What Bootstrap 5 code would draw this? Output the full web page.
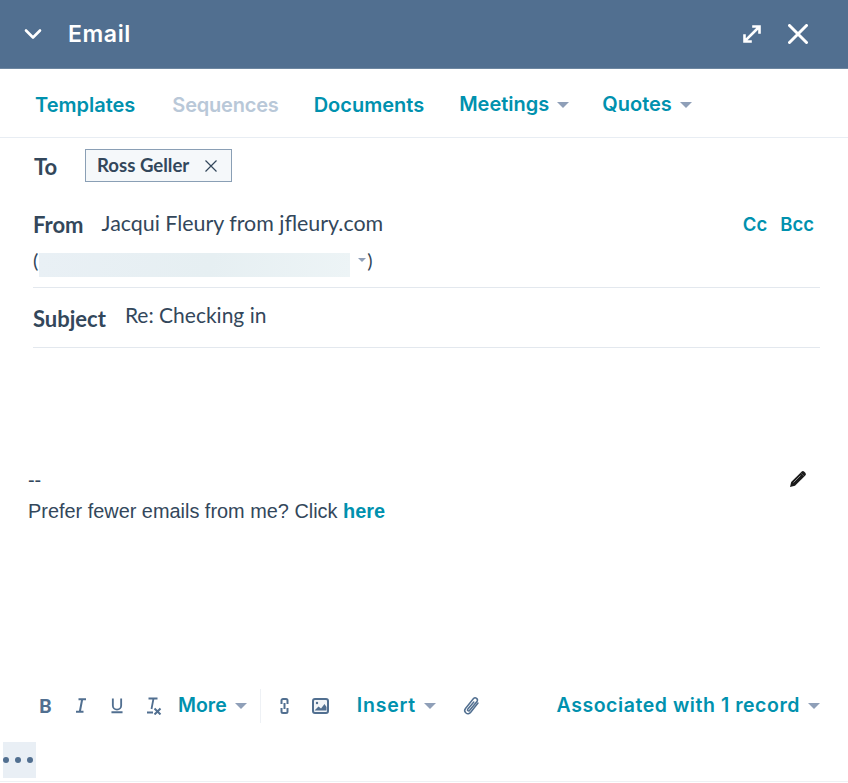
<!DOCTYPE html>
<html lang="en">
<head>
<meta charset="utf-8">
<title>Email</title>
<link href="https://cdn.jsdelivr.net/npm/bootstrap@5.3.0/dist/css/bootstrap.min.css" rel="stylesheet">
<style>
html,body{height:100%;}
body{font-family:Lato,"Liberation Sans",sans-serif;color:#33475b;background:#fff;overflow:hidden;}
.mail-shell{width:848px;height:783px;}
.mail-head{height:69px;background:#516f90;border-bottom:1px solid #6d86a0;color:#fff;padding:0 40px 0 24px;}
.mail-title{font-family:Inter,sans-serif;font-weight:600;font-size:23px;letter-spacing:.6px;margin-left:26px;line-height:1;}
.head-gap{gap:26px;}
.tab-row{height:69px;border-bottom:1px solid #e8edf3;padding:0 0 0 35px;}
.tab-link,.tool-link{font-family:Inter,sans-serif;font-weight:600;color:#0091ae;text-decoration:none;white-space:nowrap;}
.tab-link{font-size:20px;line-height:1;margin-right:35px;padding-top:4px;}
.tab-first{margin-right:37px;}
.tab-off{color:#b9c8d8;letter-spacing:-.2px;}
.tab-drop{padding-top:1px;margin-right:33px;}
.caret-mark{display:inline-block;width:0;height:0;border-left:6px solid transparent;border-right:6px solid transparent;border-top:6px solid #8f9fb8;margin-left:8px;vertical-align:3px;}
.to-row{padding:11px 0 0 34px;height:65px;}
.field-label{font-family:Lato,sans-serif;font-weight:700;font-size:22px;color:#33475b;line-height:1;}
.to-label{width:51px;margin-top:7px;}
.from-label{margin-top:2px;}
.chip-box{height:33px;width:147px;background:#f5f8fa;border:1px solid #8a9fb5;font-family:Lato,sans-serif;font-weight:700;font-size:18.6px;padding:0 14px 0 11px;color:#33475b;}
.from-row{padding:7px 34px 0 33px;height:34px;font-size:21.4px;}
.from-val{margin-left:18px;line-height:1;}
.cc-link{font-family:Inter,sans-serif;font-weight:600;color:#0091ae;font-size:18.5px;margin-left:13px;text-decoration:none;}
.addr-row{margin:0 28px 0 33px;height:51px;border-bottom:1px solid #e3e8ee;font-size:20px;line-height:1;padding-top:13px;position:relative;}
.addr-blur{position:absolute;left:6px;top:16px;width:311px;height:24px;background:linear-gradient(100deg,#e9f0f5,#e6eff2 55%,#edf4f6);}
.addr-end{margin-left:320px;display:flex;align-items:center;}
.mini-caret{display:inline-block;width:0;height:0;border-left:4px solid transparent;border-right:4px solid transparent;border-top:4px solid #8f9fb8;margin:0 1px 1px 0;}
.subj-row{margin:0 28px 0 33px;height:60px;border-bottom:1px solid #e3e8ee;padding-top:3px;}
.subj-val{font-size:21px;line-height:1;margin-left:19px;margin-bottom:10px;}
.body-zone{height:337px;padding:117px 30px 0 28px;font-family:"Liberation Sans",sans-serif;font-size:19.9px;line-height:31px;position:relative;}
.sig-link{color:#0091ae;font-weight:700;text-decoration:none;}
.pen-mark{position:absolute;top:122px;right:41px;}
.tool-row{height:41px;padding:0 28px 0 39px;}
.tool-link{font-size:19.5px;line-height:1;}
.tool-ico{display:block;color:#516f90;flex:none;}
.tool-bold{font-family:Lato,sans-serif;font-weight:900;font-size:19px;line-height:1;color:#516f90;width:11px;}
.gap-i{margin-left:26px;}
.gap-u{margin-left:25px;}
.gap-t{margin-left:24px;}
.gap-more{margin-left:16px;}
.tool-div{width:1px;height:34px;background:#eef1f5;margin:0 19px 0 13px;}
.gap-img{margin-left:23px;}
.gap-insert{margin-left:28px;letter-spacing:.8px;}
.gap-clip{margin-left:26px;}
.tool-assoc{letter-spacing:.55px;}
.dots-box{width:33px;height:36px;margin:16px 0 0 3px;background:#e9eff5;gap:6px;}
.dot-mark{width:6px;height:6px;border-radius:50%;background:#516f90;}
.bottom-line{border-top:1px solid #eef1f4;margin-top:3px;}
</style>
</head>
<body>
<div class="mail-shell d-flex flex-column">
  <div class="mail-head d-flex align-items-center">
    <svg width="18" height="12" viewBox="0 0 18 12" fill="none" stroke="#fff" stroke-width="2.6" stroke-linecap="round" stroke-linejoin="round"><path d="M2 2.500l7 7 7-7"/></svg>
    <span class="mail-title">Email</span>
    <div class="ms-auto d-flex align-items-center head-gap">
      <svg width="20" height="20" viewBox="0 0 20 20" fill="none" stroke="#fff" stroke-width="2.600" stroke-linecap="square"><path d="M3.500 16.500L16.500 3.500M11.500 2.500h6v6M2.500 11.500v6h6"/></svg>
      <svg width="20" height="20" viewBox="0 0 20 20" fill="none" stroke="#fff" stroke-width="3" stroke-linecap="round"><path d="M1.500 1.500l17 17M18.500 1.500l-17 17"/></svg>
    </div>
  </div>
  <div class="tab-row d-flex align-items-center">
    <a class="tab-link tab-first" href="#">Templates</a>
    <a class="tab-link tab-off" href="#">Sequences</a>
    <a class="tab-link" href="#">Documents</a>
    <a class="tab-link tab-drop" href="#">Meetings<span class="caret-mark"></span></a>
    <a class="tab-link tab-drop" href="#">Quotes<span class="caret-mark"></span></a>
  </div>
  <div class="to-row d-flex align-items-start">
    <span class="field-label to-label">To</span>
    <span class="chip-box d-flex align-items-center justify-content-between">Ross Geller
      <svg width="12" height="12" viewBox="0 0 12 12" fill="none" stroke="#33475b" stroke-width="1.200"><path d="M.5.500l11 11M11.500.500l-11 11"/></svg>
    </span>
  </div>
  <div class="from-row d-flex align-items-center">
    <span class="field-label from-label">From</span>
    <span class="from-val">Jacqui Fleury from jfleury.com</span>
    <span class="ms-auto"><a class="cc-link" href="#">Cc</a><a class="cc-link" href="#">Bcc</a></span>
  </div>
  <div class="addr-row">
    <div class="addr-blur"></div>
    <div class="d-flex align-items-center">(<span class="addr-end"><span class="mini-caret"></span>)</span></div>
  </div>
  <div class="subj-row d-flex align-items-center">
    <span class="field-label">Subject</span>
    <span class="subj-val">Re: Checking in</span>
  </div>
  <div class="body-zone">
    <div>--</div>
    <div>Prefer fewer emails from me? Click <a class="sig-link" href="#">here</a></div>
    <svg class="pen-mark" width="18" height="18" viewBox="0 0 18 18"><path d="M1 17l1.200-5L11.500 2.700l3.800 3.800L6 15.800z" fill="#1b1b1b"/><path d="M12.500 1.700a2 2 0 0 1 2.800 0l1 1a2 2 0 0 1 0 2.800l-1 1-3.800-3.800z" fill="#1b1b1b"/><path d="M4.500 12.500l7-7" stroke="#888" stroke-width="1"/></svg>
  </div>
  <div class="tool-row d-flex align-items-center">
    <span class="tool-bold">B</span>
    <svg class="tool-ico gap-i" width="10" height="15" viewBox="0 0 10 15" fill="none" stroke="#516f90" stroke-width="2"><path d="M2.500 1.200h7.500M0 13.800h7.500M6.200 1.200L3.800 13.800"/></svg>
    <svg class="tool-ico gap-u" width="12" height="17" viewBox="0 0 13 17" fill="none" stroke="#516f90" stroke-width="2"><path d="M2 1v7.500a4.500 4.500 0 0 0 9 0V1M.5 15.800h12"/></svg>
    <svg class="tool-ico gap-t" width="15" height="18" viewBox="0 0 15 18" fill="none" stroke="#516f90" stroke-width="1.800"><path d="M1.500 1.500h9M6.500 1.500L4.500 12M0 15.500h6"/><path d="M7.500 11.500l6 6M13.500 11.500l-6 6" stroke-width="2"/></svg>
    <a class="tool-link gap-more" href="#">More<span class="caret-mark"></span></a>
    <span class="tool-div"></span>
    <svg class="tool-ico" width="9" height="16" viewBox="0 0 9 16" fill="none" stroke="#516f90" stroke-width="2"><path d="M1.500 6V2.500A1.500 1.500 0 0 1 3 1h3a1.500 1.500 0 0 1 1.500 1.500V6M1.500 10v3.500A1.500 1.500 0 0 0 3 15h3a1.500 1.500 0 0 0 1.500-1.500V10M4.500 5v6"/></svg>
    <svg class="tool-ico gap-img" width="17" height="16" viewBox="0 0 17 16" fill="none"><rect x="1" y="1" width="15" height="14" rx="2" fill="#f2f5f8" stroke="#516f90" stroke-width="2"/><path d="M2.500 12.500l4-4 2.500 2 3.500-4.500 2 3v3.500z" fill="#516f90"/><circle cx="5" cy="5" r="1.200" fill="#516f90"/></svg>
    <a class="tool-link gap-insert" href="#">Insert<span class="caret-mark"></span></a>
    <svg class="tool-ico gap-clip" width="18" height="20" viewBox="0 0 18 20" fill="none" stroke="#516f90" stroke-width="1.500" stroke-linecap="round"><path d="M16 7l-7.500 9.500a3.200 3.200 0 0 1-5-4L11.500 2.500a2.300 2.300 0 0 1 3.600 2.800L7.500 14.500a1.100 1.100 0 0 1-1.800-1.300L11.800 6"/></svg>
    <a class="tool-link tool-assoc ms-auto" href="#">Associated with 1 record<span class="caret-mark"></span></a>
  </div>
  <div class="dots-box d-flex align-items-center"><span class="dot-mark"></span><span class="dot-mark"></span><span class="dot-mark"></span></div>
  <div class="bottom-line"></div>
</div>
<script src="https://cdn.jsdelivr.net/npm/bootstrap@5.3.0/dist/js/bootstrap.bundle.min.js"></script>
</body>
</html>
